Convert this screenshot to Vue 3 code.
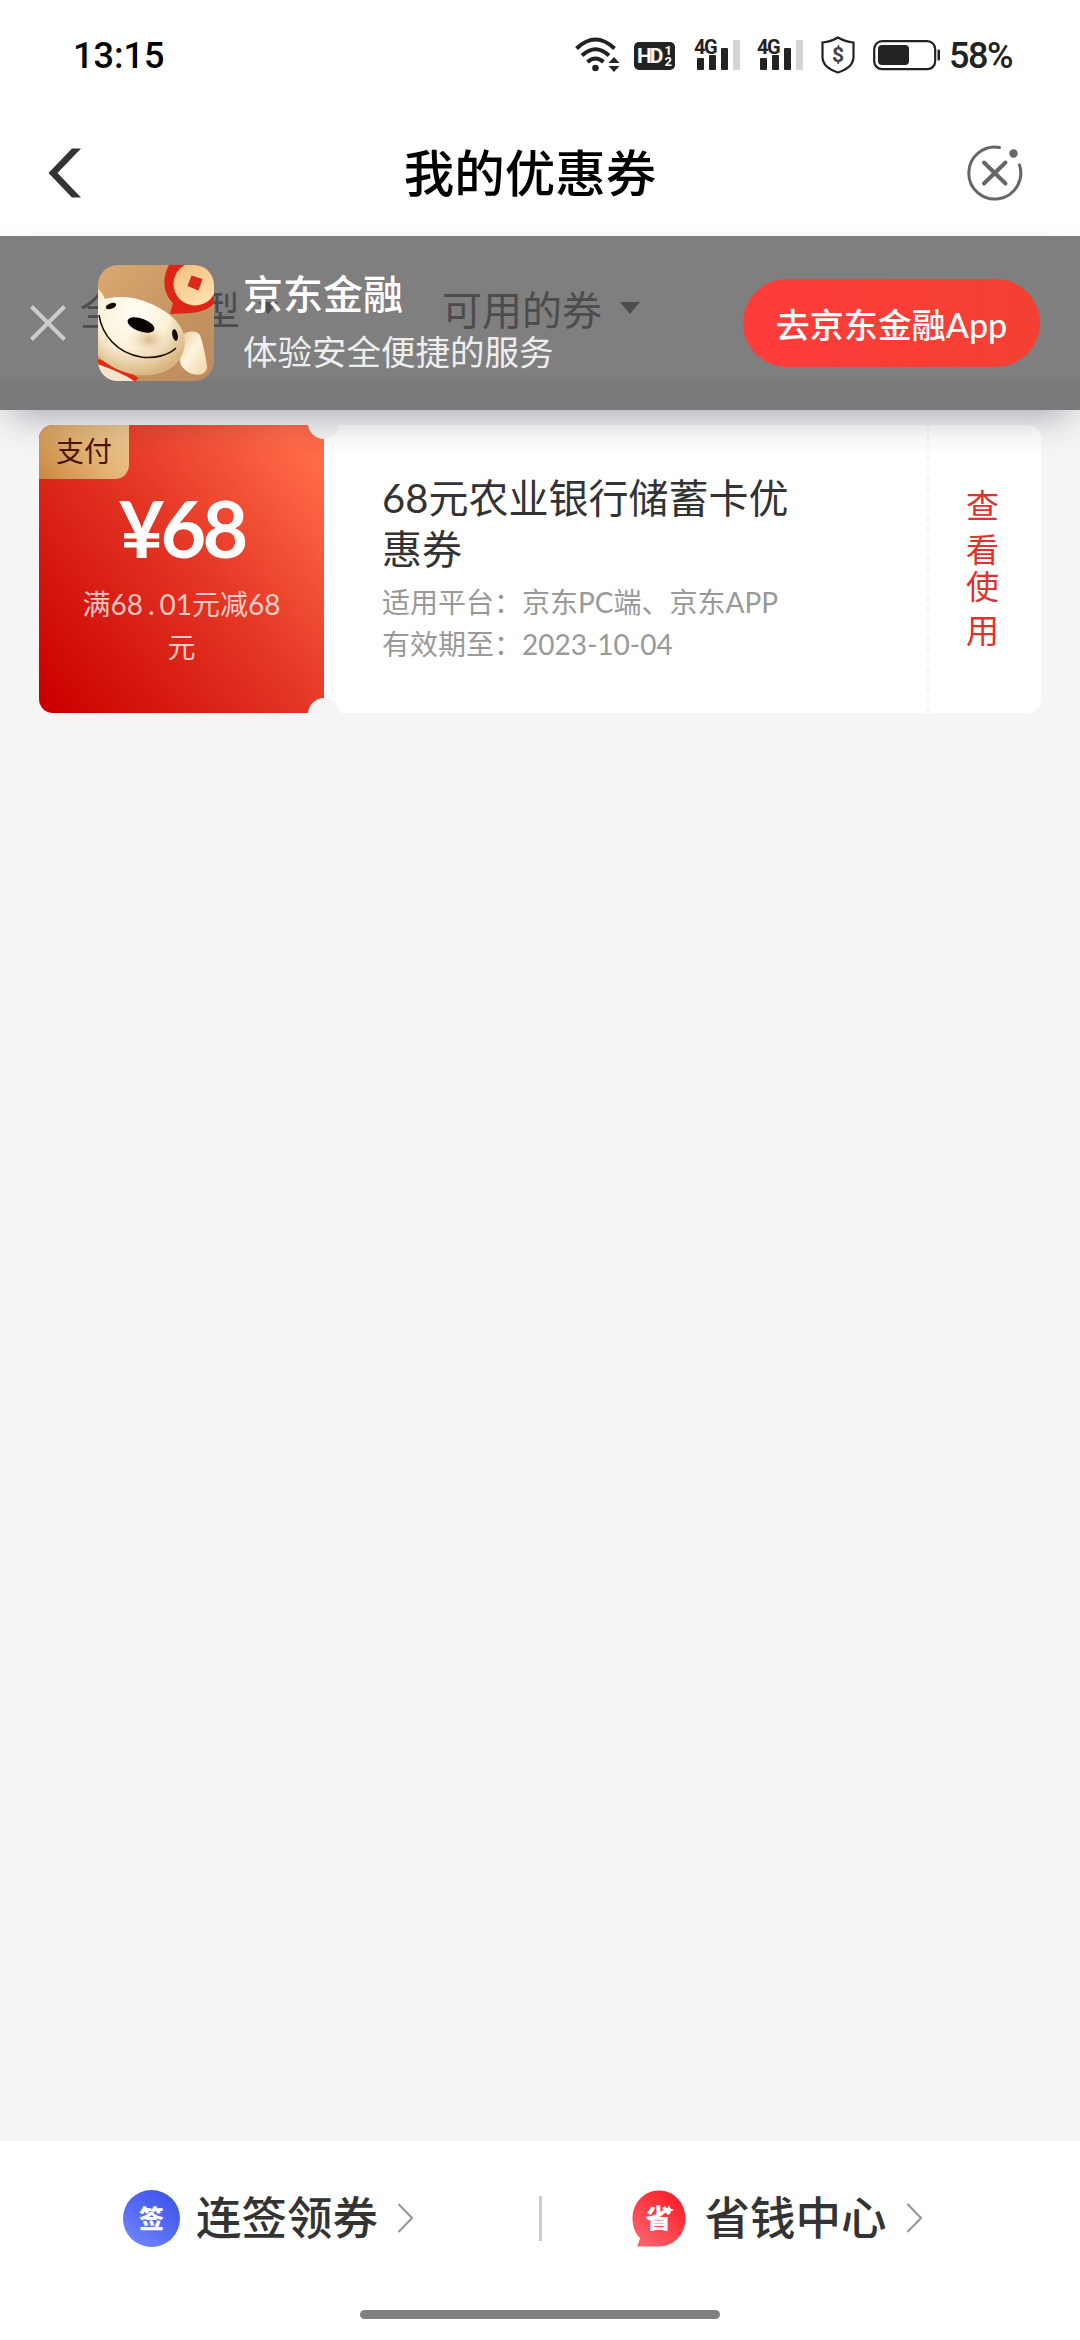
<template>
  <div class="coupon-page">
    <header class="page-header">
      <div class="status-bar">
        <span class="time">13:15</span>
        <div class="status-icons">
          <svg class="icon-wifi" width="46" height="36" viewBox="0 0 46 36">
            <g fill="none" stroke="#222" stroke-width="4">
              <path d="M1.5 11.5 Q20.5 -6.5 39.5 11.5" />
              <path d="M7 18.5 Q20.500 6 34 18.500" />
              <path d="M12.500 25 Q20.500 18 28.500 25" />
            </g>
            <circle cx="20.500" cy="31" r="3.300" fill="#222" />
            <path d="M33.500 26 L39 20 L44.500 26 Z M33.500 29 L39 35 L44.500 29 Z" fill="#222" />
          </svg>
          <div class="icon-hd">
            <span class="hd-text">HD</span>
            <span class="hd-num"><i>1</i><i>2</i></span>
          </div>
          <div v-for="n in 2" :key="n" class="signal">
            <span class="signal-label">4G</span>
            <i class="bar bar-1"></i>
            <i class="bar bar-2"></i>
            <i class="bar bar-3"></i>
            <i class="bar bar-4"></i>
          </div>
          <div class="icon-shield">
            <svg width="34" height="38" viewBox="0 0 34 38">
              <path d="M17 1.500 C22 4.500 27 6 32.500 6.500 V21 C32.500 29 26 33.500 17 36.500 C8 33.500 1.500 29 1.500 21 V6.500 C7 6 12 4.500 17 1.500 Z" fill="none" stroke="#222" stroke-width="2.200" />
            </svg>
            <span>$</span>
          </div>
          <svg class="icon-battery" width="68" height="32" viewBox="0 0 68 32">
            <rect x="1.200" y="2.200" width="61" height="28" rx="8" fill="none" stroke="#222" stroke-width="2.200" />
            <rect x="5" y="6" width="31" height="20" rx="4" fill="#222" />
            <rect x="64.500" y="10.500" width="2.500" height="11" rx="1" fill="#222" />
          </svg>
          <span class="battery-text">58%</span>
        </div>
      </div>
      <div class="nav-bar">
        <svg width="34" height="50" viewBox="0 0 34 50">
          <path d="M24 0.500 H33 L9.500 25 L33 49.500 H24 L0.500 25 Z" fill="#333" />
        </svg>
        <h1 class="nav-title">我的优惠券</h1>
        <svg width="56" height="56" viewBox="0 0 56 56" fill="none" stroke="#666" stroke-linecap="round">
          <path d="M32.500 2.500 A26 26 0 1 0 52.500 20" stroke-width="3" />
          <path d="M17 17.500 L38.500 38.500 M38.500 17.500 L17 38.500" stroke-width="4" />
          <circle cx="46.500" cy="8.500" r="4.200" fill="#666" stroke="none" />
        </svg>
      </div>
    </header>

    <div class="filter-bar">
      <div v-for="item in filters" :key="item" class="filter-item">
        <span>{{ item }}</span>
        <i class="caret"></i>
      </div>
    </div>

    <main class="coupon-list">
      <div v-for="coupon in coupons" :key="coupon.id" class="coupon">
        <div class="coupon-left">
          <span class="coupon-tag">{{ coupon.tag }}</span>
          <div class="coupon-amount">¥{{ coupon.amount }}</div>
          <div class="coupon-limit">满68<b>.</b>01元减68<br />元</div>
        </div>
        <div class="coupon-info">
          <div class="coupon-title">{{ coupon.title }}</div>
          <div class="coupon-desc">适用平台：{{ coupon.platform }}</div>
          <div class="coupon-desc">有效期至：{{ coupon.expire }}</div>
        </div>
        <div class="coupon-action" @click="useCoupon">
          <span>查</span><span>看</span><span>使</span><span>用</span>
        </div>
      </div>
    </main>

    <footer class="bottom-bar">
      <div class="bottom-links">
        <div class="bottom-link">
          <span class="sign-icon">签</span>
          <span class="link-text">连签领券</span>
          <svg width="17" height="30" viewBox="0 0 17 30">
            <path d="M1.500 1 L15 15 L1.500 29" fill="none" stroke="#999" stroke-width="2.200" />
          </svg>
        </div>
        <i class="divider"></i>
        <div class="bottom-link save-link">
          <span class="save-icon">
            <svg width="54" height="57" viewBox="0 0 54 57">
              <defs>
                <linearGradient id="saveBg" x1="0.800" y1="0.200" x2="0.200" y2="1">
                  <stop offset="0" stop-color="#fb2530" />
                  <stop offset="1" stop-color="#f9646b" />
                </linearGradient>
              </defs>
              <path d="M27 0.500 C42 0.500 53.500 13 53.500 28.500 C53.500 44 42 56.500 27 56.500 H5 C6.500 53 7.500 50 8 48 C3 43 0.500 36 0.500 28.500 C0.500 13 12 0.500 27 0.500 Z" fill="url(#saveBg)" />
              <path d="M37 15 L38.500 18.500 L42 20 L38.500 21.500 L37 25 L35.500 21.500 L32 20 L35.500 18.500 Z" fill="#fff" />
            </svg>
            <b>省</b>
          </span>
          <span class="link-text">省钱中心</span>
          <svg width="17" height="30" viewBox="0 0 17 30">
            <path d="M1.500 1 L15 15 L1.500 29" fill="none" stroke="#999" stroke-width="2.200" />
          </svg>
        </div>
      </div>
      <div class="home-indicator"></div>
    </footer>

    <!-- App download banner, floats over the filter bar -->
    <div v-if="showBanner" class="app-banner">
      <svg class="banner-close" width="36" height="36" viewBox="0 0 36 36" @click="showBanner = false">
        <path d="M1.500 1.500 L34.500 34.500 M34.500 1.500 L1.500 34.500" stroke="#ccc" stroke-width="4" />
      </svg>
      <svg class="banner-logo" width="116" height="116" viewBox="0 0 116 116">
        <defs>
          <clipPath id="logoClip"><rect width="116" height="116" rx="20" /></clipPath>
          <linearGradient id="logoBg" x1="0" y1="0" x2="1" y2="1">
            <stop offset="0" stop-color="#dba873" />
            <stop offset="0.600" stop-color="#c4935f" />
            <stop offset="1" stop-color="#c08a61" />
          </linearGradient>
          <radialGradient id="faceBg" cx="0.420" cy="0.300" r="0.700">
            <stop offset="0" stop-color="#fffdf6" />
            <stop offset="0.550" stop-color="#fdf3dc" />
            <stop offset="1" stop-color="#d9b682" />
          </radialGradient>
          <radialGradient id="cheekBg" cx="0.500" cy="0.500" r="0.500">
            <stop offset="0" stop-color="#dcb984" />
            <stop offset="1" stop-color="#f8e8c8" stop-opacity="0" />
          </radialGradient>
          <linearGradient id="coinBg" x1="0" y1="0" x2="0.600" y2="1">
            <stop offset="0" stop-color="#f0bd7c" />
            <stop offset="1" stop-color="#ffe0ac" />
          </linearGradient>
          <linearGradient id="earBg" x1="0" y1="0" x2="1" y2="1">
            <stop offset="0" stop-color="#e6c795" />
            <stop offset="0.450" stop-color="#fff4dd" />
            <stop offset="1" stop-color="#efd5a6" />
          </linearGradient>
        </defs>
        <g clip-path="url(#logoClip)">
          <rect width="116" height="116" fill="url(#logoBg)" />
          <path d="M71 0 C63 14 66 30 75 38 L72 49 C88 48 108 50 118 36 V0 Z" fill="#df2516" />
          <circle cx="97" cy="19" r="21.500" fill="url(#coinBg)" />
          <path d="M93.500 10.500 L104.500 14 L100.500 25.500 L89.500 21 Z" fill="#d92a18" />
          <path d="M0 95 L40 116 H0 Z" fill="#f4e4cc" />
          <path d="M-2 96 C10 100 25 105 39 115" fill="none" stroke="#df2d13" stroke-width="5" />
          <path d="M83 72 C86 66 98 64 102 70 C106 82 108 94 109 101 C110 110 98 112 90 107 C82 102 79 94 84 84 Z" fill="url(#earBg)" />
          <path d="M-2 22 C4 26 5 30 7 34 C30 28 55 36 73 51 C87 63 90 76 84 90 C77 106 58 112 38 110 C20 107 5 98 -2 88 Z" fill="url(#faceBg)" />
          <ellipse cx="51" cy="75" rx="23" ry="16" fill="url(#cheekBg)" />
          <path d="M1 50 C4 70 19 88 43 92 C57 94 71 90 78 83" fill="none" stroke="#160a02" stroke-width="1.600" />
          <ellipse cx="43" cy="60" rx="14" ry="6.500" transform="rotate(20 43 60)" fill="#090300" />
          <ellipse cx="13" cy="41" rx="5.500" ry="2.800" transform="rotate(-22 13 41)" fill="#160a02" />
          <ellipse cx="77" cy="70" rx="2.700" ry="6" transform="rotate(-12 77 70)" fill="#160a02" />
        </g>
      </svg>
      <div class="banner-text">
        <div class="banner-title">京东金融</div>
        <div class="banner-sub">体验安全便捷的服务</div>
      </div>
      <button class="banner-btn">去京东金融App</button>
    </div>
  </div>
</template>

<script setup>
import { ref } from 'vue';

const showBanner = ref(true);

const filters = ref(['全部类型', '可用的券']);

const coupons = ref([
  {
    id: 1,
    tag: '支付',
    amount: 68,
    title: '68元农业银行储蓄卡优惠券',
    platform: '京东PC端、京东APP',
    expire: '2023-10-04',
  },
]);

const useCoupon = () => {
  alert('查看使用');
};
</script>

<style>
body {
  margin: 0;
  background-color: #f5f5f5;
}
</style>

<style scoped>
.coupon-page {
  position: relative;
  display: flex;
  flex-direction: column;
  width: 1080px;
  height: 2340px;
  overflow: hidden;
  background-color: #f5f5f5;
  font-family: Lato, "Noto Sans CJK SC", sans-serif;
}

.coupon-page * {
  box-sizing: border-box;
}

i {
  font-style: normal;
}

svg {
  display: block;
  flex: none;
}

/* Header */
.page-header {
  height: 236px;
  background-color: #fff;
}

.status-bar {
  display: flex;
  justify-content: space-between;
  height: 112px;
  padding: 36px 66px 0 73px;
  font-family: Roboto, sans-serif;
}

.time {
  font-size: 36px;
  line-height: 41px;
  font-weight: 500;
  color: #000;
}

.status-icons {
  display: flex;
  align-items: flex-start;
  height: 40px;
  color: #222;
}

.icon-wifi {
  margin-top: 1px;
  margin-right: 13px;
}

.icon-hd {
  display: flex;
  align-items: center;
  justify-content: center;
  width: 41px;
  height: 28px;
  margin-top: 6px;
  margin-right: 19px;
  border-radius: 5px;
  background-color: #222;
  color: #fff;
  font-weight: 700;
}

.hd-text {
  font-size: 21px;
  letter-spacing: -2px;
  line-height: 28px;
}

.hd-num {
  display: flex;
  flex-direction: column;
  margin-left: 3px;
  font-size: 13px;
  line-height: 11px;
}

.signal {
  position: relative;
  display: flex;
  align-items: flex-end;
  gap: 5px;
  width: 47px;
  height: 34px;
  padding-left: 3px;
  margin-right: 16px;
}

.signal-label {
  position: absolute;
  left: 0;
  top: 1px;
  font-size: 20px;
  line-height: 20px;
  font-weight: 700;
  letter-spacing: -1.5px;
}

.bar {
  width: 7px;
  border-radius: 1px;
  background-color: #222;
}

.bar-1 { height: 12px; }
.bar-2 { height: 15px; }
.bar-3 { height: 22px; }
.bar-4 { height: 30px; background-color: #d4d4d4; }

.icon-shield {
  display: grid;
  place-items: center;
  margin-left: 1px;
  margin-right: 18px;
}

.icon-shield svg,
.icon-shield span {
  grid-area: 1 / 1;
}

.icon-shield span {
  font-size: 21px;
  line-height: 24px;
  font-weight: 700;
  color: #444;
}

.icon-battery {
  margin-top: 3px;
  margin-right: 8px;
}

.battery-text {
  font-size: 36px;
  line-height: 41px;
  width: 65px;
  letter-spacing: -1.5px;
  font-weight: 500;
}

.nav-bar {
  display: flex;
  align-items: center;
  justify-content: space-between;
  height: 122px;
  padding: 0 57px 0 48px;
}

.nav-title {
  margin: 0;
  padding-left: 11px;
  font-size: 50.5px;
  line-height: 60px;
  font-weight: 500;
  color: #000;
}

/* Filter */
.filter-bar {
  display: flex;
  align-items: center;
  gap: 164px;
  height: 144px;
  padding-left: 80px;
  background-color: #fff;
  font-size: 40px;
  color: #999;
}

.filter-item {
  display: flex;
  align-items: center;
  gap: 18px;
}

.caret {
  border: 10px solid transparent;
  border-top: 12px solid #999;
  border-bottom: 0;
}

/* Coupon */
.coupon-list {
  flex: 1;
  padding: 45px 39px 0;
}

.coupon {
  position: relative;
  display: flex;
  height: 288px;
  overflow: hidden;
  border-radius: 14px;
  background-color: #fff;
}

/* Notches between both halves */
.coupon::before,
.coupon::after {
  content: '';
  position: absolute;
  left: 269px;
  width: 32px;
  height: 32px;
  border-radius: 50%;
  background-color: #f5f5f5;
}

.coupon::before {
  top: -18px;
}

.coupon::after {
  bottom: -17px;
}

.coupon-left {
  display: flex;
  flex-direction: column;
  align-items: center;
  width: 285px;
  background: linear-gradient(52deg, #cb0000 3%, #e53826 55%, #ff6a47 92%);
  color: #fff;
}

.coupon-tag {
  align-self: flex-start;
  width: 90px;
  height: 54px;
  border-radius: 14px 0 14px 0;
  background: linear-gradient(50deg, #c98640, #e0b06e 50%, #ecca94);
  font-size: 28px;
  line-height: 52px;
  text-align: center;
  color: #4a1408;
}

.coupon-amount {
  margin-top: 2px;
  font-size: 79px;
  line-height: 94px;
  font-weight: 700;
  letter-spacing: -4px;
}

.coupon-limit {
  margin-top: 8px;
  font-size: 28px;
  line-height: 43px;
  text-align: center;
  color: rgba(255, 255, 255, 0.75);
}

.coupon-limit b {
  font-weight: 400;
  padding: 0 5px;
}

.coupon-info {
  width: 605px;
  padding: 48px 110px 0 58px;
  border-right: 2px dashed #f4f4f4;
}

.coupon-title {
  margin-bottom: 6px;
  font-size: 40px;
  line-height: 51px;
  color: #333;
}

.coupon-desc {
  font-size: 28px;
  line-height: 42px;
  color: #999;
  white-space: nowrap;
}

.coupon-action {
  display: flex;
  flex: 1;
  flex-direction: column;
  align-items: center;
  padding-top: 58px;
  padding-right: 5px;
  font-size: 33px;
  line-height: 44px;
  color: #e2312d;
}

.coupon-action span:nth-child(3) {
  margin-top: -7px;
}

/* Bottom */
.bottom-bar {
  height: 199px;
  background-color: #fff;
}

.bottom-links {
  display: flex;
  align-items: center;
  height: 154px;
}

.bottom-link {
  display: flex;
  align-items: center;
  width: 540px;
  padding-left: 123px;
}

.save-link {
  padding-left: 90px;
}

.link-text {
  margin: 0 19px 0 16px;
  font-size: 45.5px;
  line-height: 60px;
  font-weight: 500;
  color: #333;
}

.save-link .link-text {
  margin-left: 19px;
}

.sign-icon {
  width: 57px;
  height: 57px;
  border-radius: 50%;
  background: linear-gradient(215deg, #4058ea 15%, #5a70f5 60%, #768df8);
  color: #fff;
  font-size: 25px;
  line-height: 56px;
  font-weight: 900;
  text-align: center;
}

.save-icon {
  display: grid;
  place-items: center;
}

.save-icon svg,
.save-icon b {
  grid-area: 1 / 1;
}

.save-icon b {
  font-size: 26px;
  line-height: 28px;
  font-weight: 900;
  color: #fff;
}

.divider {
  width: 3px;
  height: 45px;
  background-color: #ccc;
}

.home-indicator {
  width: 360px;
  height: 9px;
  margin: 15px auto 0;
  border-radius: 5px;
  background-color: #808080;
}

/* Banner */
.app-banner {
  position: absolute;
  top: 236px;
  left: 0;
  display: flex;
  align-items: center;
  width: 1080px;
  height: 174px;
  padding: 0 40px 0 30px;
  background-color: rgba(0, 0, 0, 0.5);
  box-shadow: 0 16px 36px -12px rgba(35, 35, 65, 0.42);
}

.banner-logo {
  margin-left: 32px;
  margin-right: 29px;
}

.banner-text {
  flex: 1;
  color: #fff;
}

.banner-title {
  font-size: 40px;
  line-height: 58px;
  font-weight: 500;
}

.banner-sub {
  font-size: 34.5px;
  line-height: 58px;
  color: #eee;
}

.banner-btn {
  width: 297px;
  height: 88px;
  padding: 0;
  border: none;
  border-radius: 44px;
  background: linear-gradient(90deg, #ff3c3c, #f34032);
  font-family: inherit;
  font-size: 34px;
  font-weight: 500;
  color: #fff;
}
</style>
